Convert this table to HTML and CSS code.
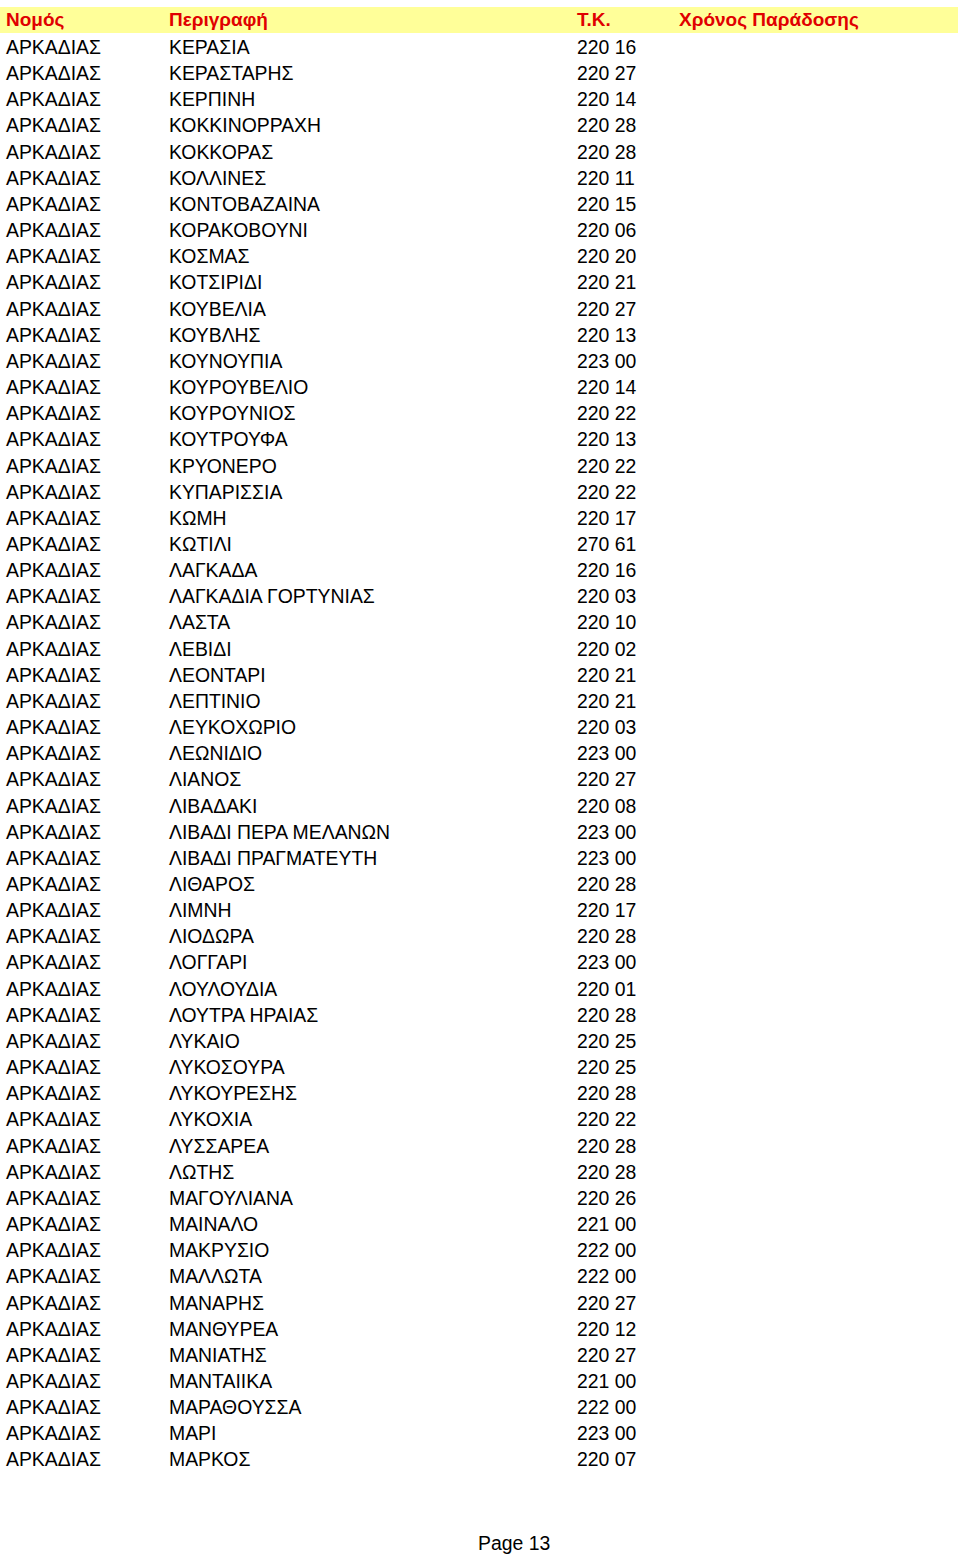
FILE: index.html
```html
<!DOCTYPE html>
<html lang="el">
<head>
<meta charset="utf-8">
<title>Page 13</title>
<link rel="stylesheet" href="styles.css">
</head>
<body>
<div class="sheet">
  <div class="row head">
    <span>Νομός</span><span>Περιγραφή</span><span>T.K.</span><span>Χρόνος Παράδοσης</span>
  </div>
  <div class="body">
  <div class="row"><span>ΑΡΚΑΔΙΑΣ</span><span>ΚΕΡΑΣΙΑ</span><span>220 16</span><span></span></div>
  <div class="row"><span>ΑΡΚΑΔΙΑΣ</span><span>ΚΕΡΑΣΤΑΡΗΣ</span><span>220 27</span><span></span></div>
  <div class="row"><span>ΑΡΚΑΔΙΑΣ</span><span>ΚΕΡΠΙΝΗ</span><span>220 14</span><span></span></div>
  <div class="row"><span>ΑΡΚΑΔΙΑΣ</span><span>ΚΟΚΚΙΝΟΡΡΑΧΗ</span><span>220 28</span><span></span></div>
  <div class="row"><span>ΑΡΚΑΔΙΑΣ</span><span>ΚΟΚΚΟΡΑΣ</span><span>220 28</span><span></span></div>
  <div class="row"><span>ΑΡΚΑΔΙΑΣ</span><span>ΚΟΛΛΙΝΕΣ</span><span>220 11</span><span></span></div>
  <div class="row"><span>ΑΡΚΑΔΙΑΣ</span><span>ΚΟΝΤΟΒΑΖΑΙΝΑ</span><span>220 15</span><span></span></div>
  <div class="row"><span>ΑΡΚΑΔΙΑΣ</span><span>ΚΟΡΑΚΟΒΟΥΝΙ</span><span>220 06</span><span></span></div>
  <div class="row"><span>ΑΡΚΑΔΙΑΣ</span><span>ΚΟΣΜΑΣ</span><span>220 20</span><span></span></div>
  <div class="row"><span>ΑΡΚΑΔΙΑΣ</span><span>ΚΟΤΣΙΡΙΔΙ</span><span>220 21</span><span></span></div>
  <div class="row"><span>ΑΡΚΑΔΙΑΣ</span><span>ΚΟΥΒΕΛΙΑ</span><span>220 27</span><span></span></div>
  <div class="row"><span>ΑΡΚΑΔΙΑΣ</span><span>ΚΟΥΒΛΗΣ</span><span>220 13</span><span></span></div>
  <div class="row"><span>ΑΡΚΑΔΙΑΣ</span><span>ΚΟΥΝΟΥΠΙΑ</span><span>223 00</span><span></span></div>
  <div class="row"><span>ΑΡΚΑΔΙΑΣ</span><span>ΚΟΥΡΟΥΒΕΛΙΟ</span><span>220 14</span><span></span></div>
  <div class="row"><span>ΑΡΚΑΔΙΑΣ</span><span>ΚΟΥΡΟΥΝΙΟΣ</span><span>220 22</span><span></span></div>
  <div class="row"><span>ΑΡΚΑΔΙΑΣ</span><span>ΚΟΥΤΡΟΥΦΑ</span><span>220 13</span><span></span></div>
  <div class="row"><span>ΑΡΚΑΔΙΑΣ</span><span>ΚΡΥΟΝΕΡΟ</span><span>220 22</span><span></span></div>
  <div class="row"><span>ΑΡΚΑΔΙΑΣ</span><span>ΚΥΠΑΡΙΣΣΙΑ</span><span>220 22</span><span></span></div>
  <div class="row"><span>ΑΡΚΑΔΙΑΣ</span><span>ΚΩΜΗ</span><span>220 17</span><span></span></div>
  <div class="row"><span>ΑΡΚΑΔΙΑΣ</span><span>ΚΩΤΙΛΙ</span><span>270 61</span><span></span></div>
  <div class="row"><span>ΑΡΚΑΔΙΑΣ</span><span>ΛΑΓΚΑΔΑ</span><span>220 16</span><span></span></div>
  <div class="row"><span>ΑΡΚΑΔΙΑΣ</span><span>ΛΑΓΚΑΔΙΑ ΓΟΡΤΥΝΙΑΣ</span><span>220 03</span><span></span></div>
  <div class="row"><span>ΑΡΚΑΔΙΑΣ</span><span>ΛΑΣΤΑ</span><span>220 10</span><span></span></div>
  <div class="row"><span>ΑΡΚΑΔΙΑΣ</span><span>ΛΕΒΙΔΙ</span><span>220 02</span><span></span></div>
  <div class="row"><span>ΑΡΚΑΔΙΑΣ</span><span>ΛΕΟΝΤΑΡΙ</span><span>220 21</span><span></span></div>
  <div class="row"><span>ΑΡΚΑΔΙΑΣ</span><span>ΛΕΠΤΙΝΙΟ</span><span>220 21</span><span></span></div>
  <div class="row"><span>ΑΡΚΑΔΙΑΣ</span><span>ΛΕΥΚΟΧΩΡΙΟ</span><span>220 03</span><span></span></div>
  <div class="row"><span>ΑΡΚΑΔΙΑΣ</span><span>ΛΕΩΝΙΔΙΟ</span><span>223 00</span><span></span></div>
  <div class="row"><span>ΑΡΚΑΔΙΑΣ</span><span>ΛΙΑΝΟΣ</span><span>220 27</span><span></span></div>
  <div class="row"><span>ΑΡΚΑΔΙΑΣ</span><span>ΛΙΒΑΔΑΚΙ</span><span>220 08</span><span></span></div>
  <div class="row"><span>ΑΡΚΑΔΙΑΣ</span><span>ΛΙΒΑΔΙ ΠΕΡΑ ΜΕΛΑΝΩΝ</span><span>223 00</span><span></span></div>
  <div class="row"><span>ΑΡΚΑΔΙΑΣ</span><span>ΛΙΒΑΔΙ ΠΡΑΓΜΑΤΕΥΤΗ</span><span>223 00</span><span></span></div>
  <div class="row"><span>ΑΡΚΑΔΙΑΣ</span><span>ΛΙΘΑΡΟΣ</span><span>220 28</span><span></span></div>
  <div class="row"><span>ΑΡΚΑΔΙΑΣ</span><span>ΛΙΜΝΗ</span><span>220 17</span><span></span></div>
  <div class="row"><span>ΑΡΚΑΔΙΑΣ</span><span>ΛΙΟΔΩΡΑ</span><span>220 28</span><span></span></div>
  <div class="row"><span>ΑΡΚΑΔΙΑΣ</span><span>ΛΟΓΓΑΡΙ</span><span>223 00</span><span></span></div>
  <div class="row"><span>ΑΡΚΑΔΙΑΣ</span><span>ΛΟΥΛΟΥΔΙΑ</span><span>220 01</span><span></span></div>
  <div class="row"><span>ΑΡΚΑΔΙΑΣ</span><span>ΛΟΥΤΡΑ ΗΡΑΙΑΣ</span><span>220 28</span><span></span></div>
  <div class="row"><span>ΑΡΚΑΔΙΑΣ</span><span>ΛΥΚΑΙΟ</span><span>220 25</span><span></span></div>
  <div class="row"><span>ΑΡΚΑΔΙΑΣ</span><span>ΛΥΚΟΣΟΥΡΑ</span><span>220 25</span><span></span></div>
  <div class="row"><span>ΑΡΚΑΔΙΑΣ</span><span>ΛΥΚΟΥΡΕΣΗΣ</span><span>220 28</span><span></span></div>
  <div class="row"><span>ΑΡΚΑΔΙΑΣ</span><span>ΛΥΚΟΧΙΑ</span><span>220 22</span><span></span></div>
  <div class="row"><span>ΑΡΚΑΔΙΑΣ</span><span>ΛΥΣΣΑΡΕΑ</span><span>220 28</span><span></span></div>
  <div class="row"><span>ΑΡΚΑΔΙΑΣ</span><span>ΛΩΤΗΣ</span><span>220 28</span><span></span></div>
  <div class="row"><span>ΑΡΚΑΔΙΑΣ</span><span>ΜΑΓΟΥΛΙΑΝΑ</span><span>220 26</span><span></span></div>
  <div class="row"><span>ΑΡΚΑΔΙΑΣ</span><span>ΜΑΙΝΑΛΟ</span><span>221 00</span><span></span></div>
  <div class="row"><span>ΑΡΚΑΔΙΑΣ</span><span>ΜΑΚΡΥΣΙΟ</span><span>222 00</span><span></span></div>
  <div class="row"><span>ΑΡΚΑΔΙΑΣ</span><span>ΜΑΛΛΩΤΑ</span><span>222 00</span><span></span></div>
  <div class="row"><span>ΑΡΚΑΔΙΑΣ</span><span>ΜΑΝΑΡΗΣ</span><span>220 27</span><span></span></div>
  <div class="row"><span>ΑΡΚΑΔΙΑΣ</span><span>ΜΑΝΘΥΡΕΑ</span><span>220 12</span><span></span></div>
  <div class="row"><span>ΑΡΚΑΔΙΑΣ</span><span>ΜΑΝΙΑΤΗΣ</span><span>220 27</span><span></span></div>
  <div class="row"><span>ΑΡΚΑΔΙΑΣ</span><span>ΜΑΝΤΑΙΙΚΑ</span><span>221 00</span><span></span></div>
  <div class="row"><span>ΑΡΚΑΔΙΑΣ</span><span>ΜΑΡΑΘΟΥΣΣΑ</span><span>222 00</span><span></span></div>
  <div class="row"><span>ΑΡΚΑΔΙΑΣ</span><span>ΜΑΡΙ</span><span>223 00</span><span></span></div>
  <div class="row"><span>ΑΡΚΑΔΙΑΣ</span><span>ΜΑΡΚΟΣ</span><span>220 07</span><span></span></div>
  </div>
</div>
<div class="footer">Page 13</div>
</body>
</html>
```
FILE: styles.css
```css
html, body {
  margin: 0;
  padding: 0;
  background: #ffffff;
}
body {
  font-family: "Liberation Sans", Arial, sans-serif;
  color: #000000;
  font-size: 19.4px;
  width: 960px;
}
.sheet {
  padding-top: 7px;
  width: 958px;
}
.body {
  padding-top: 1px;
}
.row {
  display: grid;
  grid-template-columns: 163px 408px 102px 1fr;
  padding-left: 6px;
  height: 26.17px;
  line-height: 26.17px;
  white-space: nowrap;
}
.row.head {
  background: #ffff99;
  height: 26px;
  line-height: 26px;
  color: #e00000;
  font-weight: bold;
  font-size: 19px;
}
.footer {
  margin-top: 57px;
  padding-left: 478px;
  line-height: 26px;
}
```
